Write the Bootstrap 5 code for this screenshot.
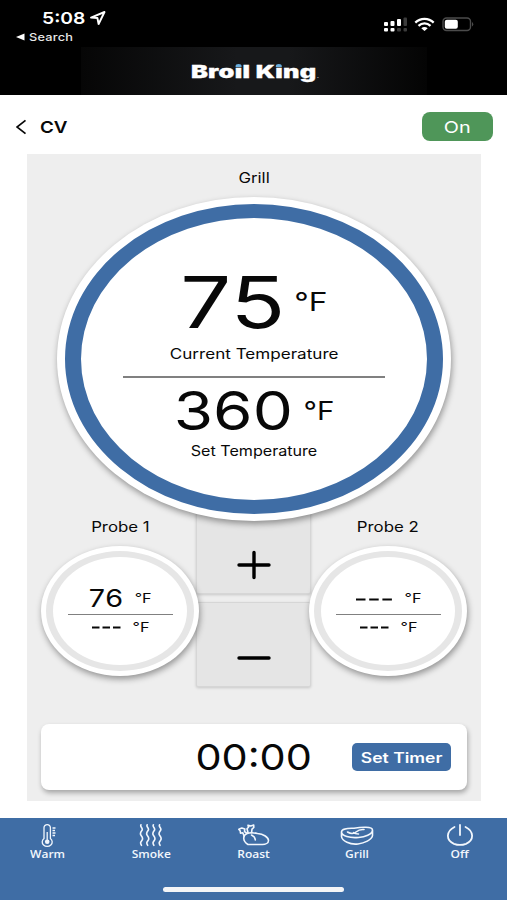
<!DOCTYPE html>
<html lang="en">
<head>
<meta charset="utf-8">
<meta name="viewport" content="width=device-width, initial-scale=1">
<title>Broil King</title>
<link href="https://cdn.jsdelivr.net/npm/bootstrap@5.3.0/dist/css/bootstrap.min.css" rel="stylesheet">
<style>
:root{--bk-blue:#3f6da5;--sx:1.2}
body{width:507px;height:900px;overflow:hidden;font-family:Inter,"Liberation Sans",sans-serif;color:#080808;background:#fff}
svg{display:block;flex:none}
/* wide lettering used across the app */
.wide{display:inline-block;white-space:nowrap;line-height:1;transform:scaleX(var(--sx))}
.wide-start{transform-origin:left center}
.topbar{height:95px;background:#000;color:#fff}
.status{height:47px;padding:10px 33px 0 42px}
.clock{font-size:16.5px;font-weight:600;--sx:1.17}
.back-app{font-size:11px;font-weight:500;color:#e8e8e8;--sx:1.16;letter-spacing:.2px}
.brand{width:346px;height:48px;background:linear-gradient(90deg,#060606,#17181a 45%,#17181a 60%,#040404)}
.logo{font-size:17px;font-weight:900;--sx:1.49;letter-spacing:.2px;margin:2px 0 0 3px;-webkit-text-stroke:.3px #fff}
.reg{font-size:5px;letter-spacing:0;color:#999;-webkit-text-stroke:0}
.flame{position:relative}
.flame::after{content:"";position:absolute;left:50%;top:2px;width:4px;height:3px;margin-left:-2px;border-radius:3px 3px 0 0;background:#6aaede}
.title-row{height:59px;padding:0 14px 0 16px}
.title{font-size:16.5px;font-weight:600;--sx:1.14}
.btn-on{width:71px;height:29px;border-radius:8px;background:#4f9659;font-size:16.5px}
.panel{width:454px;height:647px;background:#eee;margin-left:27px}
.label{font-size:14px}
.dial{width:394px;height:324px;padding:7px 8px;border-radius:50%;background:#fff;z-index:2;box-shadow:1px 3px 6px rgba(0,0,0,.38)}
.dial-ring{border:solid var(--bk-blue);border-width:14px 16px;border-radius:50%}
.rule{height:2px;background:#808080}
.controls{grid-template-columns:155px 115px 155px;margin-top:-21px;height:186px;padding-left:14px}
.pad{background:#e5e5e5;border:1px solid #d6d6d6;border-radius:2px;box-shadow:0 1px 3px rgba(0,0,0,.16)}
.probe{width:158px;z-index:1}
.probe-dial{width:158px;height:130px;padding:5px;border-radius:50%;background:#fff;box-shadow:1px 3px 6px rgba(0,0,0,.38)}
.probe-ring{border:solid #e6e6e6;border-width:6px 7px;border-radius:50%}
.unit{font-size:13.5px}
.timer{width:426px;height:66px;border-radius:8px;margin-top:38px;background:#fff;box-shadow:1px 3px 5px rgba(0,0,0,.3);padding-right:16px}
.btn-timer{width:99px;height:28px;border-radius:5px;background:var(--bk-blue);font-size:14px;font-weight:600}
.tabs{height:82px;margin-top:17px;background:var(--bk-blue);color:#f2f7fd}
.tab{height:44px;width:103px}
.tab .wide{font-family:"Open Sans","Noto Sans",sans-serif;font-size:10px;font-weight:600}
.home{width:181px;height:5px;background:#f4f5f7}
</style>
<script src="https://cdn.jsdelivr.net/npm/bootstrap@5.3.0/dist/js/bootstrap.bundle.min.js"></script>
</head>
<body>
<header class="topbar">
  <div class="status d-flex justify-content-between">
    <div>
      <div class="d-flex">
        <span class="wide wide-start clock">5:08</span>
        <svg style="margin-left:10px" width="18" height="16" viewBox="0 0 18 16" fill="none" stroke="#fff" stroke-width="1.9" stroke-linejoin="round"><path d="M2 7.6 15.5 2 9.6 14 8.4 8Z"/></svg>
      </div>
      <div class="d-flex align-items-center" style="margin:5px 0 0 -26px">
        <svg width="13" height="8" viewBox="0 0 13 8"><path d="M0 4 8.5.6v6.8Z" fill="#fff"/></svg>
        <span class="wide wide-start back-app">Search</span>
      </div>
    </div>
    <div class="d-flex" style="padding-top:6px">
      <svg width="91" height="17" viewBox="0 0 91 17">
        <g fill="#fff"><rect x="1" y="6" width="4" height="4" rx="1"/><rect x="7.500" y="5" width="4" height="5" rx="1"/><rect x="14" y="3" width="4" height="7" rx="1"/><rect x="1" y="12" width="4" height="3.600" rx="1"/><rect x="7.500" y="12" width="4" height="3.600" rx="1"/></g>
        <g fill="#3b3b3b"><rect x="20.500" y="1.500" width="3.500" height="8.500" rx="1"/><rect x="14" y="12" width="4" height="3.600" rx="1"/><rect x="20.500" y="12" width="3.500" height="3.600" rx="1"/></g>
        <g fill="none" stroke="#fff" stroke-width="2.200"><path d="M32.300 6.600C37.500 1.500 45.500 1.500 50.700 6.600M35.500 9.900C39 6.600 44 6.600 47.500 9.900"/></g>
        <path d="M38.300 12.200Q41.500 9.800 44.700 12.200L41.500 15Z" fill="#fff"/>
        <rect x="60" y="2" width="27.500" height="12.500" rx="3.500" fill="none" stroke="#4b4b4b" stroke-width="1.400"/><rect x="61.800" y="3.800" width="13" height="9" rx="2" fill="#fff"/><path d="M89 6q2.500 2 0 4.500Z" fill="#4b4b4b"/>
      </svg>
    </div>
  </div>
  <div class="brand mx-auto d-flex align-items-center justify-content-center">
    <span class="wide logo">Bro<span class="flame">ı</span>l K<span class="flame">ı</span>ng<span class="reg">.</span></span>
  </div>
</header>
<main>
  <div class="title-row d-flex align-items-center justify-content-between pt-1">
    <div class="d-flex align-items-center">
      <svg width="24" height="16" viewBox="0 0 24 16" fill="none" stroke="#080808" stroke-width="1.700"><path d="M9.500 1.300 1 8l8.500 6.700"/></svg>
      <span class="wide wide-start title" style="margin-top:2px">CV</span>
    </div>
    <button class="btn btn-on p-0 text-white border-0 d-flex align-items-center justify-content-center"><span class="wide" style="margin-top:2px">On</span></button>
  </div>
  <section class="panel">
    <div class="text-center lh-1" style="height:43px;padding-top:15px"><span class="wide label">Grill</span></div>
    <div class="dial position-relative mx-auto">
      <div class="dial-ring w-100 h-100 d-flex flex-column align-items-center">
        <div class="wide d-flex align-items-center" style="margin-top:48px;gap:7px;height:72px;--sx:1.27">
          <span style="font-size:71px">75</span><span style="font-size:25px">°F</span>
        </div>
        <span class="wide label" style="margin-top:9px;--sx:1.22">Current Temperature</span>
        <div class="rule" style="width:262px;margin-top:15px"></div>
        <div class="wide d-flex align-items-center" style="margin-top:5px;gap:9px;height:56px;--sx:1.18">
          <span style="font-size:54px">360</span><span style="font-size:25px">°F</span>
        </div>
        <span class="wide label" style="margin-top:5px;--sx:1.15">Set Temperature</span>
      </div>
    </div>
    <div class="controls d-grid">
      <div class="probe position-relative text-center lh-1" style="padding-top:18px">
        <span class="wide label">Probe 1</span>
        <div class="probe-dial" style="margin-top:12px">
          <div class="probe-ring w-100 h-100 d-flex flex-column align-items-center">
            <div class="wide d-flex align-items-center justify-content-center" style="margin-top:29px;gap:9px;height:26px"><span style="font-size:24px;letter-spacing:.6px">76</span><span class="unit">°F</span></div>
            <div class="rule" style="width:105px;margin-top:2px;height:1px"></div>
            <div class="d-flex align-items-center" style="margin-top:4px;gap:13px;height:17px">
              <svg width="29" height="3"><path d="M0 1.500h29" stroke="#080808" stroke-width="1.800" stroke-dasharray="7.500 3"/></svg><span class="wide unit">°F</span></div>
          </div>
        </div>
      </div>
      <div class="d-flex flex-column" style="gap:8px">
        <div class="pad d-flex justify-content-center" style="height:94px;padding-top:47px"><svg width="34" height="34" viewBox="0 0 34 34" stroke="#000" stroke-width="3.400" stroke-linecap="round"><path d="M2 17h30M17 4.500v25"/></svg></div>
        <div class="pad d-flex justify-content-center" style="height:85px;padding-top:38px"><svg width="34" height="34" viewBox="0 0 34 34" stroke="#000" stroke-width="3.400" stroke-linecap="round"><path d="M2 17h30"/></svg></div>
      </div>
      <div class="probe position-relative text-center lh-1" style="padding-top:18px;margin-left:-2px">
        <span class="wide label">Probe 2</span>
        <div class="probe-dial" style="margin-top:12px">
          <div class="probe-ring w-100 h-100 d-flex flex-column align-items-center">
            <div class="d-flex align-items-center" style="margin-top:29px;gap:14px;height:26px">
              <svg width="36" height="3"><path d="M0 1.500h36" stroke="#080808" stroke-width="2.200" stroke-dasharray="9.500 3.700"/></svg><span class="wide unit">°F</span></div>
            <div class="rule" style="width:105px;margin-top:2px;height:1px"></div>
            <div class="d-flex align-items-center" style="margin-top:4px;gap:13px;height:17px">
              <svg width="29" height="3"><path d="M0 1.500h29" stroke="#080808" stroke-width="1.800" stroke-dasharray="7.500 3"/></svg><span class="wide unit">°F</span></div>
          </div>
        </div>
      </div>
    </div>
    <div class="timer mx-auto d-flex align-items-center justify-content-end">
      <span class="wide" style="font-size:36px;margin-right:48px;--sx:1.15">00:00</span>
      <button class="btn btn-timer p-0 text-white border-0"><span class="wide" style="--sx:1.25">Set Timer</span></button>
    </div>
  </section>
</main>
<nav class="tabs d-flex flex-column align-items-center">
  <div class="d-flex justify-content-center" style="padding:5px 0 0 1px;height:69px">
    <div class="tab d-flex flex-column align-items-center">
      <svg width="16" height="26" viewBox="0 0 16 26" fill="none" stroke="#f2f7fd" stroke-width="1.300"><path d="M4 15.500V4.800a3.200 3.200 0 0 1 6.400 0v10.700a5 4.500 0 1 1-6.400 0ZM7.200 9v9M12.500 5H15.500M12.500 7.500h2.500M12.500 10h3M12.500 12.500h2.500"/><circle cx="7.200" cy="18.800" r="2.300" fill="#f2f7fd" stroke="none"/></svg>
      <span class="wide">Warm</span></div>
    <div class="tab d-flex flex-column align-items-center">
      <svg width="24" height="26" viewBox="0 0 24 26" fill="none" stroke="#f2f7fd" stroke-width="1.600" stroke-linecap="round"><path d="M2 1.800c-1.500 2 2.500 3.500 1 5.500s-2.500 3-1 5 2.500 3 1 5-2 2.500-.5 5M8.200 1.800c-1.500 2 2.500 3.500 1 5.500s-2.500 3-1 5 2.500 3 1 5-2 2.500-.5 5M14.400 1.800c-1.500 2 2.500 3.500 1 5.500s-2.500 3-1 5 2.500 3 1 5-2 2.500-.5 5M20.600 1.800c-1.500 2 2.500 3.500 1 5.500s-2.500 3-1 5 2.500 3 1 5-2 2.500-.5 5"/></svg>
      <span class="wide">Smoke</span></div>
    <div class="tab d-flex flex-column align-items-center">
      <svg width="32" height="26" viewBox="0 0 32 26" fill="none" stroke="#f2f7fd" stroke-width="1.600" stroke-linejoin="round" stroke-linecap="round"><path d="M10 21.500C4.500 18 4.500 12.500 9 10.500c4-1.500 7-.8 10.500 0 6 .3 11 4 11 7 0 2.500-3 4-6 4Z"/><path d="M13.500 12q4 2 3.800 5M6 12.800 4.800 9.800l-2.300.4L2.200 8 .8 6.300l3-1.200 3 1L6.500 8.500 9 10.300M10 9.500 9 5.800l1.500-1.500L10 2.200 12.800 3l2.900-.9.100 2.400L14 6.200l-.5 3.600"/></svg>
      <span class="wide">Roast</span></div>
    <div class="tab d-flex flex-column align-items-center">
      <svg width="34" height="26" viewBox="0 0 34 26" fill="none" stroke="#f2f7fd" stroke-width="1.600" stroke-linejoin="round" stroke-linecap="round"><path d="M1.500 9C1.500 5.200 9 5.500 14 5.200 21 4 32.500 3.200 32.500 7c0 4.500-8 7-14 7.500C10 15.300 1.500 13 1.500 9ZM1.500 9v4.500C2 18 10 22 18 21c6-.8 14-4 14.500-8.500V7"/><path d="M7.500 9q5 3 8.500 0t8-2.500M13.500 9.500q1.500 1.500 5 1.500"/></svg>
      <span class="wide">Grill</span></div>
    <div class="tab d-flex flex-column align-items-center">
      <svg width="28" height="26" viewBox="0 0 28 26" fill="none" stroke="#f2f7fd" stroke-width="1.800" stroke-linecap="round"><path d="M8.500 4C-.5 8.500 0 17.500 8 20.800c4 1.500 8 1.500 12 0C28 17.500 28.500 8.500 19.500 4M14 2v10"/></svg>
      <span class="wide">Off</span></div>
  </div>
  <div class="home rounded-pill"></div>
</nav>
</body>
</html>
